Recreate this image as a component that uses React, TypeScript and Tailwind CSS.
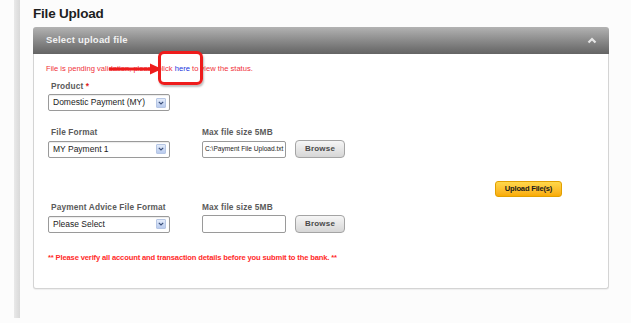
import React from "react";

function Select({ value }: { value: string }) {
  return (
    <div className="w-[122px] h-[17px] border border-[#9a9a9a] rounded-[2px] bg-white flex items-center justify-between pl-[4px] pr-[3px] shadow-[inset_0_1px_1px_rgba(0,0,0,0.08)]">
      <span className="text-[8.5px] text-[#222] leading-none">{value}</span>
      <span className="w-[10px] h-[10px] rounded-[1px] border border-[#b6c6e4] bg-gradient-to-b from-[#e4ecfa] to-[#b9cbee] flex items-center justify-center">
        <svg width="6" height="4" viewBox="0 0 6 4">
          <path d="M0.8 0.8 L3 3 L5.2 0.8" stroke="#3a4f7a" strokeWidth="1.2" fill="none" />
        </svg>
      </span>
    </div>
  );
}

function Browse() {
  return (
    <div className="w-[50px] h-[18px] border border-[#a4a4a4] rounded-[4px] bg-gradient-to-b from-[#f6f6f6] to-[#d6d6d6] flex items-center justify-center text-[8px] font-bold text-[#4a4a4a] tracking-[0.2px]">
      Browse
    </div>
  );
}

function Label({ children }: { children: React.ReactNode }) {
  return (
    <div className="h-[10px] text-[8.3px] font-bold text-[#5a5a5a] leading-[10px] tracking-[0.15px]">
      {children}
    </div>
  );
}

export default function App() {
  return (
    <div
      className="w-[631px] h-[323px] bg-[#fcfcfc] flex overflow-hidden"
      style={{ fontFamily: '"Liberation Sans", Arial, sans-serif' }}
    >
      <div className="ml-[14px] w-[6px] h-[318px] bg-gradient-to-r from-[#e9e9e9] to-[#d9d9d9]" />
      <div className="ml-[13px] flex flex-col w-[576px]">
        <div className="mt-[6px] h-[21px] text-[13.5px] font-bold text-[#1e1e1e] leading-[15px] tracking-[-0.2px]">
          File Upload
        </div>
        <div className="h-[27px] rounded-t-[3px] bg-gradient-to-b from-[#b3b3b3] to-[#646464] flex items-center justify-between pl-[13px] pr-[12px]">
          <span className="text-[9.5px] font-bold text-[#f2f2f2] tracking-[0.2px]">Select upload file</span>
          <svg width="10" height="7" viewBox="0 0 10 7">
            <path d="M1.5 5.5 L5 2 L8.5 5.5" stroke="#e6e6e6" strokeWidth="2.2" fill="none" />
          </svg>
        </div>
        <div className="relative h-[235px] bg-white border border-t-0 border-[#d4d4d4] rounded-b-[3px] flex flex-col pl-[12px] shadow-[0_1px_1px_rgba(0,0,0,0.06)]">
          <div className="mt-[10px] h-[10px] text-[7.6px] leading-[10px] text-[#f0303a]">
            File is pending validation, please click <span className="text-[#2233dd]">here</span> to view the status.
          </div>
          <div className="mt-[7px] pl-[5px] flex">
            <div className="h-[10px] text-[8.3px] font-bold text-[#5a5a5a] leading-[10px] tracking-[0.15px]">
              Product <span className="text-[#e02020]">*</span>
            </div>
          </div>
          <div className="mt-[3px] pl-[2px]">
            <Select value="Domestic Payment (MY)" />
          </div>

          <div className="mt-[16px] flex">
            <div className="w-[156px] pl-[5px]">
              <Label>File Format</Label>
            </div>
            <Label>Max file size 5MB</Label>
          </div>
          <div className="mt-[3px] flex items-center pl-[2px]">
            <Select value="MY Payment 1" />
            <div className="ml-[32px] w-[84px] h-[17px] border border-[#9a9a9a] rounded-[2px] bg-white flex items-center pl-[2px] text-[6.6px] text-[#222] whitespace-nowrap overflow-hidden">
              C:\Payment File Upload.txt
            </div>
            <div className="ml-[9px]">
              <Browse />
            </div>
          </div>

          <div className="mt-[23px] flex justify-end pr-[46px]">
            <div className="w-[67px] h-[16px] rounded-[3px] border border-[#e2a000] bg-gradient-to-b from-[#ffd84a] to-[#f9ab00] flex items-center justify-center text-[7.6px] font-bold text-[#1a1a1a] tracking-[-0.2px]">
              Upload File(s)
            </div>
          </div>

          <div className="mt-[5px] flex">
            <div className="w-[156px] pl-[5px]">
              <Label>Payment Advice File Format</Label>
            </div>
            <Label>Max file size 5MB</Label>
          </div>
          <div className="mt-[3px] flex items-center pl-[2px]">
            <Select value="Please Select" />
            <div className="ml-[32px] w-[84px] h-[18px] border border-[#9a9a9a] rounded-[2px] bg-white" />
            <div className="ml-[9px]">
              <Browse />
            </div>
          </div>

          <div className="mt-[20px] pl-[2px] h-[10px] text-[7.6px] font-bold leading-[10px] text-[#ff2a2a] tracking-[-0.15px]">
            ** Please verify all account and transaction details before you submit to the bank. **
          </div>

          {/* Annotation overlay */}
          <svg className="absolute left-[75px] top-[9px]" width="54" height="12" viewBox="0 0 54 12">
            <line x1="0" y1="6" x2="44" y2="6" stroke="#ee1c1c" strokeWidth="3" />
            <path d="M41 0.5 L53 6 L41 11.5 Z" fill="#ee1c1c" />
          </svg>
          <div className="absolute left-[124px] top-[-3px] w-[45px] h-[34px] border-[3px] border-[#ee1c1c] rounded-[6px] shadow-[1px_2px_2px_rgba(0,0,0,0.25)]" />
        </div>
      </div>
    </div>
  );
}
